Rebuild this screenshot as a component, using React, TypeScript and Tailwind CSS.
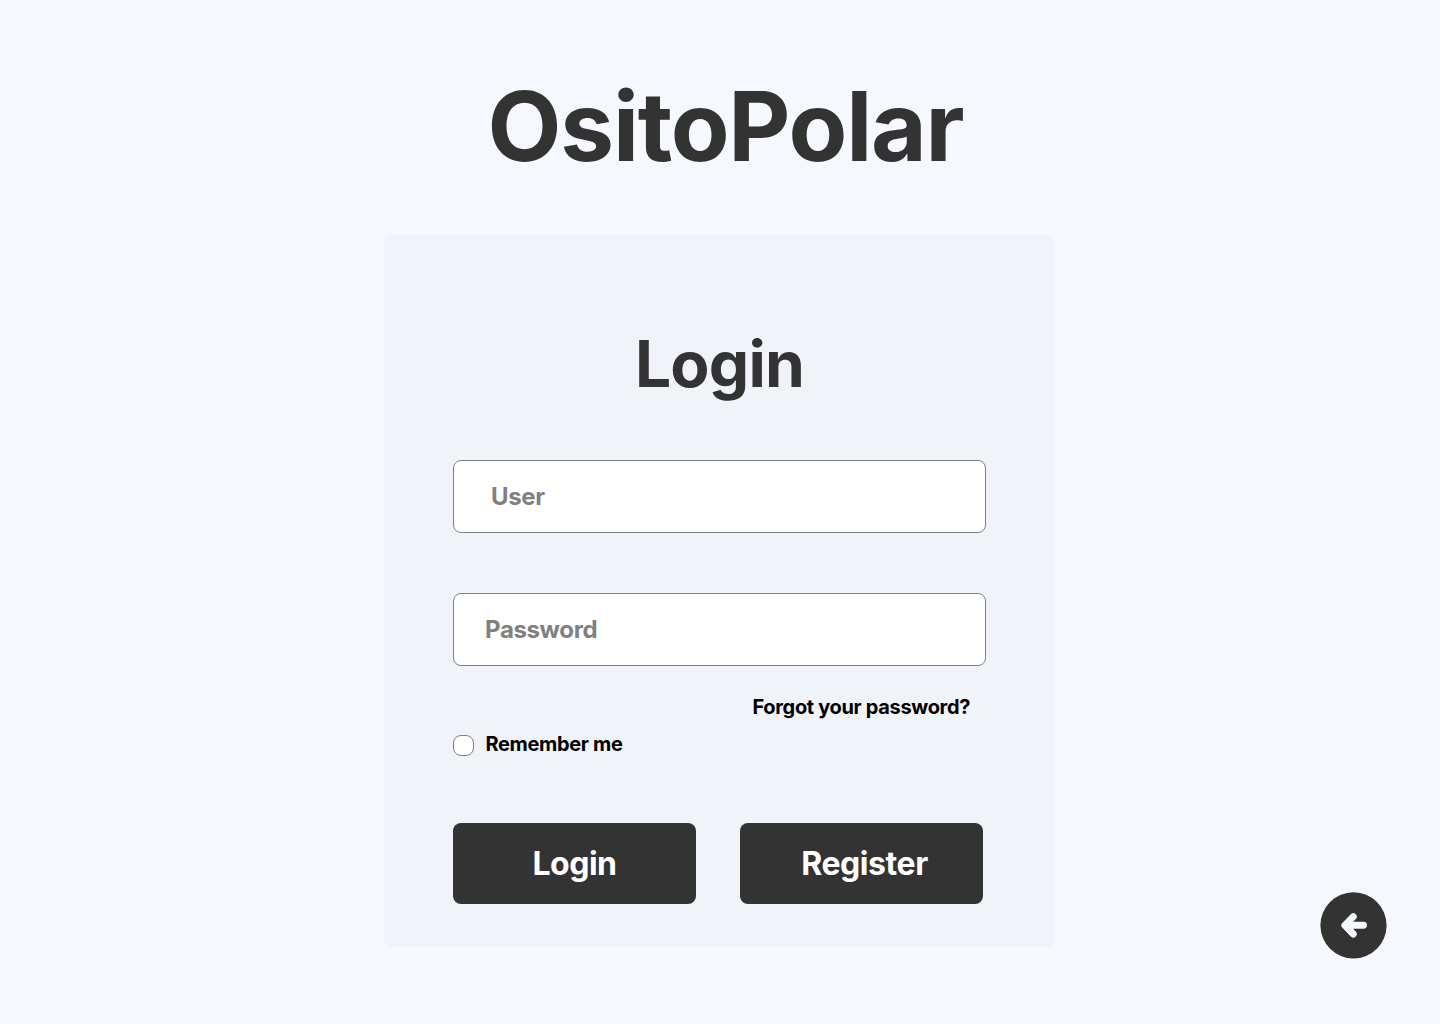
export default function App() {
  return (
    <main className="relative flex h-[1024px] w-[1440px] flex-col items-center overflow-hidden bg-[#f5f8ff] font-['Inter',sans-serif] font-bold text-[#333333]">
      <h1 className="mt-[68px] ml-[11px] text-[96px] leading-[116px] tracking-[-0.0127em]">OsitoPolar</h1>
      <section className="mt-[51px] mr-px flex h-[712px] w-[671px] flex-col rounded-lg bg-[#f0f3f8] pr-[69px] pl-[69px]">
        <h2 className="mt-[90px] text-center text-[64px] leading-[77px] tracking-[-0.0127em]">Login</h2>
        <input placeholder="User" className="mt-[58px] h-[73px] w-[533px] shrink-0 rounded-lg border border-[#808080] bg-white pl-[37px] text-[24px] tracking-[-0.014em] placeholder:text-[#808080] placeholder:opacity-100" />
        <input placeholder="Password" className="mt-[60px] h-[73px] w-[533px] shrink-0 rounded-lg border border-[#808080] bg-white pl-[31px] text-[24px] tracking-[-0.015em] placeholder:text-[#808080] placeholder:opacity-100" />
        <a className="mt-[29px] mr-[16px] self-end text-[20px] leading-6 tracking-[-0.017em] text-black">Forgot your password?</a>
        <label className="mt-[13px] flex h-6 items-center text-[20px] leading-6 tracking-[-0.017em] text-black">
          <input type="checkbox" className="mt-[3px] mr-[11.5px] size-[21px] appearance-none rounded-[8px] border border-[#808080] bg-white" />
          Remember me
        </label>
        <div className="mt-[67px] flex gap-[44px]">
          <button className="h-[81px] w-[243px] rounded-lg bg-[#333333] text-[32px] tracking-[-0.015em] text-white">Login</button>
          <button className="h-[81px] w-[243px] rounded-lg bg-[#333333] pl-[6px] text-[32px] tracking-[-0.0135em] text-white">Register</button>
        </div>
      </section>
      <button aria-label="Back" className="absolute top-[892px] left-[1320px] size-[67px]">
        <svg viewBox="0 0 67 67" className="size-full" fill="none">
          <circle cx="33.5" cy="33.3" r="33.1" fill="#333333" />
          <path d="M33.3 24.6L24.8 33.3L33.3 42Z" fill="#f5f8ff" />
          <path d="M33.3 24.6L24.8 33.3L33.3 42M27 33.3H43.5" stroke="#f5f8ff" strokeWidth="6.9" strokeLinecap="round" strokeLinejoin="round" />
        </svg>
      </button>
    </main>
  );
}
